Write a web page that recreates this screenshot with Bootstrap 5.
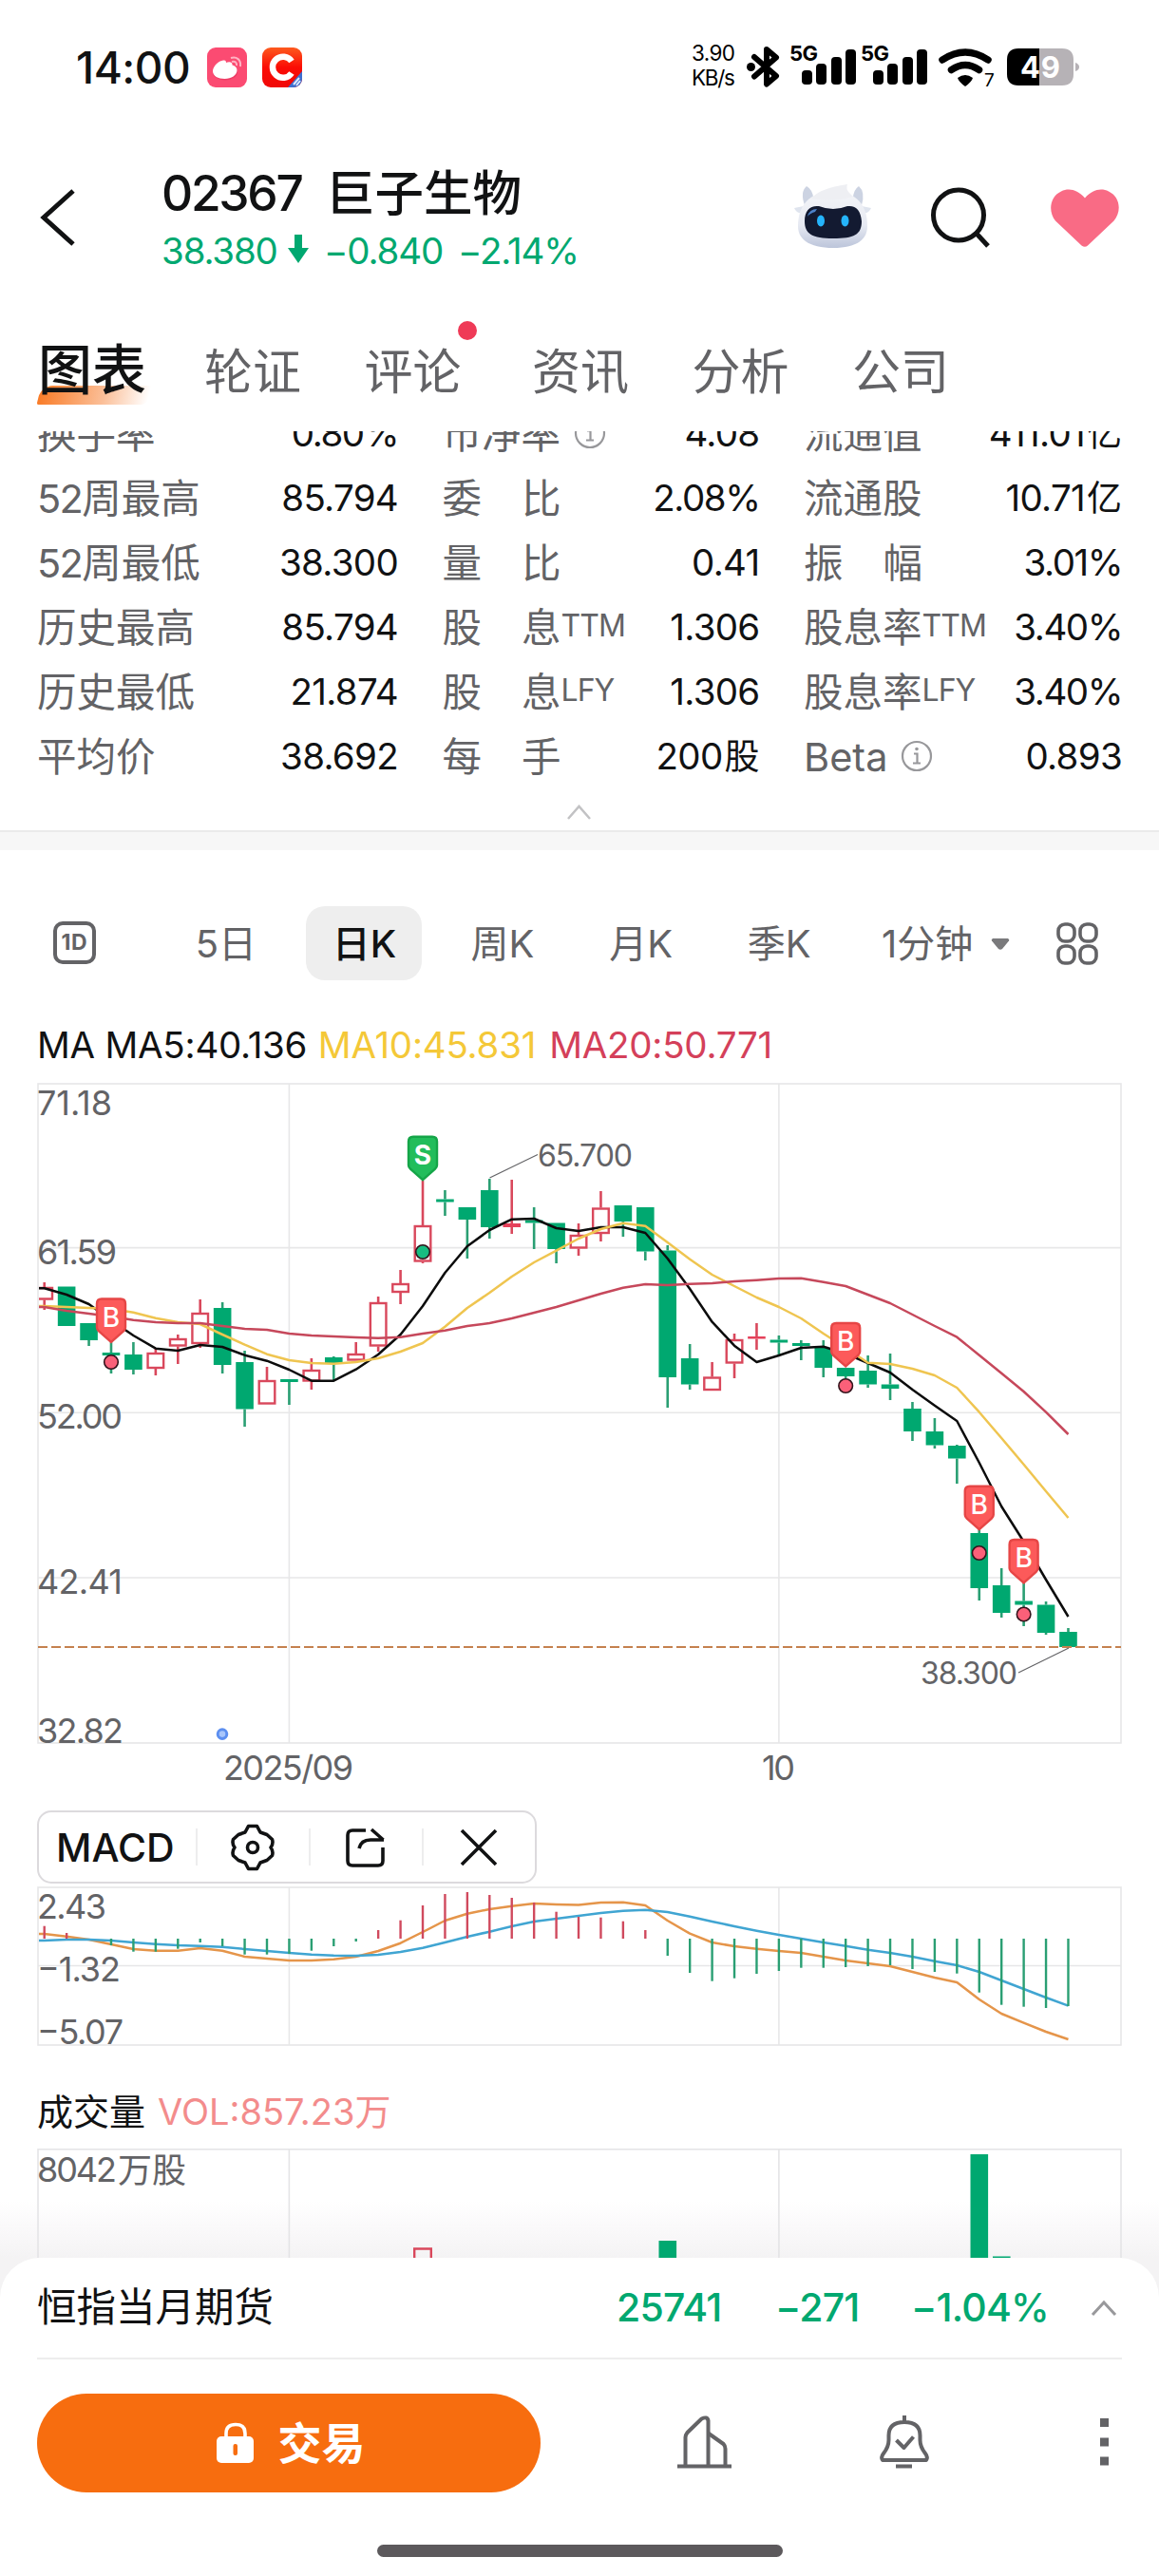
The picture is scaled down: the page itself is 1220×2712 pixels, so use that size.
<!DOCTYPE html>
<html lang="zh-CN">
<head>
<meta charset="utf-8">
<meta name="viewport" content="width=device-width, initial-scale=1">
<title>02367 巨子生物</title>
<link href="https://cdn.jsdelivr.net/npm/bootstrap@5.3.0/dist/css/bootstrap.min.css" rel="stylesheet">
<style>
:root{--ink:#111213;--grey:#636366;--green:#00a870;--line:#e7e7e8}
body{font-family:Inter,"Noto Sans CJK SC",sans-serif;color:var(--ink);background:#fff;width:1220px;height:2712px;overflow:hidden;line-height:1}
svg{display:block;flex:none}
.screen{width:1220px;height:2712px;overflow:hidden}
.num{letter-spacing:-.04em}
.status-bar{height:142px;padding:0 20px 0 80px}
.clock{font-size:46px;font-weight:500;letter-spacing:-.01em;width:118px;white-space:nowrap}
.app-icon{margin-left:20px}
.app-icon + .app-icon{margin-left:16px}
.app-bar{height:170px;padding-left:40px}
.back{margin-top:56px}
.title-block{width:660px;margin:33px 0 0 88px}
.stock-title{font-size:51.5px;font-weight:500;height:58px;white-space:pre}
.stock-title .code{letter-spacing:-.045em;width:173px}
.stock-sub{font-size:38.5px;color:var(--green);height:50px;margin-top:6px;letter-spacing:-.03em}
.stock-sub svg{margin-top:-4px}
.head-icons{margin-top:40px}
.tabs{height:142px;padding:50px 0 0 40px;color:var(--grey);font-size:51px;line-height:60px}
.tabs a{color:inherit;text-decoration:none;position:relative;margin-right:66.5px}
.tabs a.on{color:var(--ink);font-size:57px;font-weight:500;margin-right:61px;line-height:56px}
.tabs a.on span{position:relative}
.tabs .after-dot{margin-left:8px}
.swash{position:absolute;left:1px;top:44px;width:116px;height:20px;border-radius:12px 0 6px 2px;background:linear-gradient(90deg,#f97c28,#fbc09a 60%,#fff);transform:skewX(-14deg)}
.red-dot{position:absolute;right:-16px;top:-24px;width:20px;height:20px;border-radius:50%;background:#ef3a57}
.stats{height:420px;overflow:hidden;padding:0 39px}
.stats-inner{margin-top:-30.5px;gap:46.5px}
.stat-col{font-size:41.5px}
.stat{height:68px;color:var(--grey)}
.stat b{font-weight:400;color:var(--ink);font-size:38.5px;margin-top:-3px;letter-spacing:-.018em}
.stat b.pct{letter-spacing:-.038em}
.stat i{font-style:normal;font-size:37px;letter-spacing:0;margin-left:2px}
.stat small{font-size:32px;margin-top:-5px;letter-spacing:-.03em}
.gap-char{margin-left:42px}
.info{margin-left:14px;margin-top:-3px}
.collapse-mark{margin-top:14px}
.band{height:21px;background:#f7f7f7;border-top:2px solid #ebebeb}
.periods{height:165px;padding-top:59px;color:var(--grey);font-size:40px}
.periods .pill{height:78px;width:122px;border-radius:20px;padding-top:2px}
.periods .slot{width:145.6px}
.pill.on{background:#eee;color:var(--ink);font-weight:500}
.one-day{margin-left:55px}
.minute{height:80px;margin-left:35px}
.minute span{width:114px}
.grid-ico{margin:16px 0 0 47px}
.legend{height:70px;padding:10px 39px 0;font-size:38.5px;letter-spacing:-.006em;white-space:pre}
.ma10{color:#f4c838;margin-left:1px}
.ma20{color:#d4405a;margin-left:14px}
.tool{width:526px;height:77px;margin-left:39px;border:2px solid #dcdadd;border-radius:15px}
.tool>div{height:39px;border-left:2px solid #ededee;width:120px}
.tool .nm{border:0;font-size:41px;font-weight:500;line-height:41px;width:166px;padding-left:18px}
.vol-legend{height:69px;padding-left:39px;font-size:38px;color:#f38c8c}
.vol-legend .nm{color:var(--ink);margin-right:13px}
#volume{background:linear-gradient(#fff 50%,#fbfafb 70%,#f4f3f4)}
.sheet-wrap{background:#f4f3f4}
.sheet{height:335px;background:#fff;border-radius:42px 42px 0 0}
.index-row{height:107px;margin:0 39px;border-bottom:2px solid #ededed;font-size:41.5px}
.index-row .q{color:var(--green);font-weight:500;font-size:41px;letter-spacing:-.02em}
.index-row svg{margin-right:3px}
.trade{width:530px;height:104px;border-radius:52px;background:#f76d0f;color:#fff;font-size:46px;font-weight:700;border:0}
.trade svg{margin:0 25px 0 4px}
.actions{padding:36px 39px 0;height:140px}
.home{width:427px;height:13px;border-radius:7px;background:#5c595c;margin:55px auto 0}
svg text{font-family:Inter,"Noto Sans CJK SC",sans-serif}
</style>
<script src="https://cdn.jsdelivr.net/npm/bootstrap@5.3.0/dist/js/bootstrap.bundle.min.js"></script>
</head>
<body>
<main class="screen d-flex flex-column">

<div class="status-bar d-flex align-items-center flex-shrink-0">
  <div class="clock">14:00</div>
  <svg class="app-icon" width="42" height="42" viewBox="0 0 42 42"><rect width="42" height="42" rx="9" fill="#fb4b72"/><ellipse cx="19" cy="26" rx="13" ry="8.5" fill="#e0305a" opacity=".5"/><path d="M6 25c0-5 6-11 11-11.500c3-.5 3 1.500 3 2.500c3-1.500 7-1 6.500 2.500c3 .8 5 2.800 5 5.500c0 5-6 9-13 9S6 30 6 25z" fill="#fff"/><path d="M25 11c6-2 11 2 10 9M26 15c3.500-1 5.500 1 5 4" fill="none" stroke="#ffb3c3" stroke-width="2"/></svg>
  <svg class="app-icon" width="42" height="42" viewBox="0 0 42 42"><defs><clipPath id="rc"><rect width="42" height="42" rx="9"/></clipPath><linearGradient id="rg" x2="0" y2="1"><stop stop-color="#fd5a1e"/><stop offset=".5" stop-color="#fb0c05"/><stop offset="1" stop-color="#f00808"/></linearGradient></defs><g clip-path="url(#rc)"><rect width="42" height="42" fill="url(#rg)"/><path d="M42 25v17H27z" fill="#3e6fd0"/><path d="M33 39l6-7M36 40l4-5" stroke="#dce8fb" stroke-width="2"/></g><path d="M31 14.500A11 11 0 1 0 31 27" fill="none" stroke="#fff" stroke-width="6.500"/></svg>
  <svg class="ms-auto" width="480" height="60" viewBox="720 41 480 60">
    <g font-size="22.500"><text x="728" y="64" textLength="46">3.90</text><text x="728" y="90" textLength="46">KB/s</text></g>
    <path d="M794 60l23 20-10 8.500V52l10 8.500-23 20" fill="none" stroke="#000" stroke-width="6" stroke-linejoin="round" stroke-linecap="round"/><circle cx="790.500" cy="70.500" r="4.500"/>
    <g id="sig"><text x="831" y="64" font-size="22" font-weight="700" textLength="30">5G</text><rect x="844" y="74" width="11" height="15" rx="4"/><rect x="859" y="67" width="11" height="22" rx="4"/><rect x="875" y="60" width="11" height="29" rx="4"/><rect x="890" y="52" width="11" height="37" rx="4"/></g>
    <use href="#sig" x="75"/>
    <path d="M992 63q24-16 48 0M1001.500 73.500q14.500-10 29 0" fill="none" stroke="#000" stroke-width="7.500" stroke-linecap="round"/><path d="M1008 82q8-6 16 0q-1 4-8 9q-7-5-8-9z"/><text x="1036" y="91" font-size="19">7</text>
    <path d="M1094 51h-22q-12 0-12 12v15q0 12 12 12h22z"/><path d="M1094 51h24q12 0 12 12v15q0 12-12 12h-24z" fill="#b6b2b6"/><path d="M1132 66q4 1.500 4 4.500t-4 4.500z" fill="#b6b2b6"/><text x="1074" y="82" font-size="31" font-weight="700" fill="#fff" textLength="42">49</text>
  </svg>
</div>

<header class="app-bar d-flex flex-shrink-0">
  <svg class="back" width="42" height="62" viewBox="0 0 42 62"><path d="M37 3L6 31l31 28" fill="none" stroke="#111213" stroke-width="5"/></svg>
  <div class="title-block">
    <div class="stock-title d-flex align-items-center"><span class="code">02367</span><span>巨子生物</span></div>
    <div class="stock-sub d-flex align-items-center"><span style="width:133px">38.380</span><svg width="22" height="30" viewBox="0 0 22 30"><path d="M7 0h8v14h7L11 30 0 14h7z" fill="#00a870"/></svg><span style="margin-left:16px;width:141px">−0.840</span><span>−2.14%</span></div>
  </div>
  <svg class="head-icons" width="390" height="90" viewBox="830 182 390 90">
    <defs><linearGradient id="head" x2="0" y2="1"><stop stop-color="#f4f5f8"/><stop offset=".6" stop-color="#e6e9f2"/><stop offset="1" stop-color="#bcc5da"/></linearGradient></defs>
    <path d="M847 216q-5-14 2-20q7 4 7 13M907 216q4-14-3-20q-6 4-6 13" fill="#ccd3e2"/><path d="M846 217l-10 2q3 7 10 5M907 217l10 2q-3 7-10 5" fill="#dfe4ee"/>
    <path d="M840 238c0-22 12-36 37-36s36 14 36 36c0 16-14 23-36 23s-37-7-37-23z" fill="url(#head)"/>
    <path d="M854 209c7-8 18-12 38-15q-2 5 2 9l4 4q-20 6-44 2z" fill="#eeeff3"/>
    <path d="M862 217q15 6 30 0c9-1 14 4 15 16c0 14-8 18-30 18s-30-5-30-18c0-12 6-17 15-16z" fill="#131a31"/><path d="M850 228q2-8 10-8l-2 3q-6 2-8 5z" fill="#4d82c9"/>
    <ellipse cx="864" cy="232.500" rx="4" ry="6" fill="#25b4fb"/><ellipse cx="889.500" cy="232.500" rx="4" ry="6" fill="#25b4fb"/>
    <circle cx="1009" cy="226.500" r="26.500" fill="none" stroke="#111213" stroke-width="5"/><path d="M1028 246l12 13" stroke="#111213" stroke-width="5"/>
    <path d="M1138.500 258.500L1111 232.500C1103 223 1105 207 1117 201.500c8-4 17-2 25 7 8-9 17-11 25-7 12 5.500 14 21 5.500 31L1145 258.500q-3 2.500-6.500 0z" fill="#f96b85"/>
  </svg>
</header>

<nav class="tabs d-flex flex-shrink-0">
  <a class="on"><div class="swash"></div><span>图表</span></a><a>轮证</a><a>评论<div class="red-dot"></div></a><a class="after-dot">资讯</a><a>分析</a><a>公司</a>
</nav>

<section class="stats flex-shrink-0">
  <div class="stats-inner d-flex">
    <div class="stat-col" style="width:380px">
      <div class="stat d-flex align-items-center"><span>换手率</span><b class="ms-auto pct">0.80%</b></div>
      <div class="stat d-flex align-items-center"><span class="num">52</span><span>周最高</span><b class="ms-auto">85.794</b></div>
      <div class="stat d-flex align-items-center"><span class="num">52</span><span>周最低</span><b class="ms-auto">38.300</b></div>
      <div class="stat d-flex align-items-center"><span>历史最高</span><b class="ms-auto">85.794</b></div>
      <div class="stat d-flex align-items-center"><span>历史最低</span><b class="ms-auto">21.874</b></div>
      <div class="stat d-flex align-items-center"><span>平均价</span><b class="ms-auto">38.692</b></div>
    </div>
    <div class="stat-col" style="width:334px">
      <div class="stat d-flex align-items-center"><span>市净率</span><svg class="info" width="34" height="34" viewBox="0 0 34 34"><g fill="none" stroke="#98989b" stroke-width="2.200"><circle cx="17" cy="17" r="15"/><path d="M14 14.500h3.500V24M13 24.500h8"/></g><circle cx="17" cy="9.500" r="1.800" fill="#98989b"/></svg><b class="ms-auto">4.08</b></div>
      <div class="stat d-flex align-items-center"><span>委</span><span class="gap-char">比</span><b class="ms-auto pct">2.08%</b></div>
      <div class="stat d-flex align-items-center"><span>量</span><span class="gap-char">比</span><b class="ms-auto">0.41</b></div>
      <div class="stat d-flex align-items-center"><span>股</span><span class="gap-char">息</span><small>TTM</small><b class="ms-auto">1.306</b></div>
      <div class="stat d-flex align-items-center"><span>股</span><span class="gap-char">息</span><small>LFY</small><b class="ms-auto">1.306</b></div>
      <div class="stat d-flex align-items-center"><span>每</span><span class="gap-char">手</span><b class="ms-auto">200<i>股</i></b></div>
    </div>
    <div class="stat-col" style="width:335px">
      <div class="stat d-flex align-items-center"><span>流通值</span><b class="ms-auto">411.01<i>亿</i></b></div>
      <div class="stat d-flex align-items-center"><span>流通股</span><b class="ms-auto">10.71<i>亿</i></b></div>
      <div class="stat d-flex align-items-center"><span>振</span><span class="gap-char">幅</span><b class="ms-auto pct">3.01%</b></div>
      <div class="stat d-flex align-items-center"><span>股息率</span><small>TTM</small><b class="ms-auto pct">3.40%</b></div>
      <div class="stat d-flex align-items-center"><span>股息率</span><small>LFY</small><b class="ms-auto pct">3.40%</b></div>
      <div class="stat d-flex align-items-center"><span>Beta</span><svg class="info" width="34" height="34" viewBox="0 0 34 34"><g fill="none" stroke="#98989b" stroke-width="2.200"><circle cx="17" cy="17" r="15"/><path d="M14 14.500h3.500V24M13 24.500h8"/></g><circle cx="17" cy="9.500" r="1.800" fill="#98989b"/></svg><b class="ms-auto">0.893</b></div>
    </div>
  </div>
  <svg class="collapse-mark mx-auto" width="30" height="18" viewBox="0 0 30 18"><path d="M3 16L14.500 3 26 16" fill="none" stroke="#c2c2c4" stroke-width="2.500"/></svg>
</section>
<div class="band flex-shrink-0"></div>

<div class="periods d-flex flex-shrink-0">
  <svg class="one-day" width="110" height="78" viewBox="0 0 110 78"><rect x="3" y="18" width="41" height="41" rx="8" fill="none" stroke="#636366" stroke-width="4"/><text x="9.500" y="46" font-size="23" font-weight="700" fill="#636366" textLength="27">1D</text></svg>
  <div class="slot d-flex justify-content-center"><div class="pill d-flex align-items-center justify-content-center"><span>5日</span></div></div>
  <div class="slot d-flex justify-content-center"><div class="pill on d-flex align-items-center justify-content-center"><span>日K</span></div></div>
  <div class="slot d-flex justify-content-center"><div class="pill d-flex align-items-center justify-content-center"><span>周K</span></div></div>
  <div class="slot d-flex justify-content-center"><div class="pill d-flex align-items-center justify-content-center"><span>月K</span></div></div>
  <div class="slot d-flex justify-content-center"><div class="pill d-flex align-items-center justify-content-center"><span>季K</span></div></div>
  <div class="minute d-flex align-items-center"><span>1分钟</span><svg width="22" height="14" viewBox="0 0 22 14"><path d="M3 1h16q2 1 1 2.500l-7 8.500q-2 1.500-4 0L2 3.500Q1 2 3 1z" fill="#7a7a7c"/></svg></div>
  <svg class="grid-ico" width="46" height="46" viewBox="0 0 46 46"><g fill="none" stroke="#636366" stroke-width="3.600"><rect x="3" y="3" width="17" height="18" rx="7"/><rect x="26" y="3" width="17" height="18" rx="7"/><rect x="3" y="26" width="17" height="18" rx="7"/><rect x="26" y="26" width="17" height="18" rx="7"/></g></svg>
</div>

<div class="legend d-flex align-items-center flex-shrink-0"><span>MA MA5:40.136 </span><span class="ma10">MA10:45.831</span><span class="ma20">MA20:50.771</span></div>

<svg id="kline" class="flex-shrink-0" width="1220" height="776" viewBox="0 1130 1220 776"></svg>

<div class="tool d-flex align-items-center flex-shrink-0">
  <div class="nm">MACD</div>
  <div class="d-flex align-items-center justify-content-center"><svg width="48" height="50" viewBox="0 0 48 50"><path d="M19.500 2.500h9l3.500 6.500 7 2.500 5.500 5q1.500 4.500-1.500 8.500q3 4 1.500 8.500l-5.500 5-7 2.500-3.500 6.500h-9L16 41l-7-2.500-5.500-5Q2 29 5 25 2 21 3.500 16.500l5.500-5L16 9z" fill="none" stroke="#111213" stroke-width="3.600" stroke-linejoin="round"/><circle cx="24" cy="25" r="5.500" fill="none" stroke="#111213" stroke-width="3.600"/></svg></div>
  <div class="d-flex align-items-center justify-content-center"><svg width="44" height="44" viewBox="0 0 44 44"><path d="M22 4H8q-5 0-5 5v27q0 5 5 5h27q5 0 5-5V22M15 23q2-9 12-9h14M28 3l12.500 11" fill="none" stroke="#111213" stroke-width="3.600"/></svg></div>
  <div class="d-flex align-items-center justify-content-center"><svg width="42" height="42" viewBox="0 0 42 42"><path d="M3 3l36 36M39 3L3 39" stroke="#111213" stroke-width="3.600"/></svg></div>
</div>

<svg id="macd" class="flex-shrink-0" width="1220" height="205" viewBox="0 1983 1220 205"></svg>

<div class="vol-legend d-flex align-items-center flex-shrink-0"><span class="nm">成交量</span><span>VOL:857.23</span><span>万</span></div>

<svg id="volume" class="flex-shrink-0" width="1220" height="120" viewBox="0 2257 1220 120"></svg>

<div class="sheet-wrap flex-shrink-0"><div class="sheet">
  <div class="index-row d-flex align-items-center"><span style="width:610px">恒指当月期货</span><span class="q" style="width:167px">25741</span><span class="q" style="width:143px">−271</span><span class="q">−1.04%</span><svg class="ms-auto" width="32" height="18" viewBox="0 0 32 18"><path d="M4 16L16 3l12 13" fill="none" stroke="#98989b" stroke-width="3"/></svg></div>
  <div class="actions d-flex">
    <button class="trade d-flex align-items-center justify-content-center"><svg width="40" height="44" viewBox="0 0 40 44"><path d="M10 16v-4q0-9.500 10-9.500T30 12v4" fill="none" stroke="#fff" stroke-width="3.600"/><rect x="0" y="15" width="39" height="28" rx="5" fill="#fff"/><rect x="17.500" y="23" width="4.500" height="12" rx="2" fill="#f76d0f"/></svg>交易</button>
    <svg width="612" height="104" viewBox="569 2512 612 104"><g fill="none" stroke="#636366" stroke-width="4" stroke-linejoin="round"><path d="M713 2588.500h57"/><path d="M721.500 2587v-29q0-2.500 2-5l15-14.500q6-3 7 2V2587"/><path d="M746 2554l15.500 11q2 2 2 5V2587"/><path d="M929 2582q-2-3 1-7 5.500-7 5.500-14v-5q0-14 16.500-14t16.500 14v5q0 7 5.500 14 3 4 1 7zM952 2535v6M943 2588.500h17"/><path d="M943.500 2561l8 8 10-11.500"/></g><g fill="#636366"><rect x="1158" y="2538" width="9" height="9"/><rect x="1158" y="2558.500" width="9" height="9"/><rect x="1158" y="2578.500" width="9" height="9"/></g></svg>
  </div>
  <div class="home"></div>
</div></div>
</main>

<script>
// One slot per trading day, shared by all three panes.
const X = i => 46.7 + 23.43 * i;
const RED = '#d9485c', GREEN = '#00a870', WICK = '#2a9f73';
// [up/down, high, body top, body bottom, low]
const candles = [
 ['r',1350,1355,1368.5,1379],['g',1354.5,1354.5,1396,1396],['g',1393,1393,1411,1417],['g',1413,1424,1427,1446],
 ['g',1413,1426,1442,1447],['r',1419,1424,1441,1448],['r',1405,1409,1417.5,1436],['r',1368,1382,1415,1419],
 ['g',1371,1377,1437,1446],['g',1422,1434,1483.5,1502],['r',1439,1453,1478.5,1478],['g',1452,1452,1455,1479],
 ['r',1430,1442,1454.5,1463],['g',1428,1429,1435,1453],['r',1413,1425,1432.5,1432],['r',1365,1371,1417.5,1423],
 ['r',1337,1351,1361,1373],['r',1243,1290,1328.5,1330],['g',1253,1262.5,1265.5,1280],['g',1271,1271,1284,1325],
 ['g',1241,1253,1292,1304],['R',1242,1288,1292,1299],['g',1271,1284.5,1287.5,1315],['g',1287.5,1287.5,1315,1330],
 ['r',1288,1300,1314.5,1322],['r',1254,1271.5,1299,1307],['g',1269,1269,1286,1302],['g',1271,1271,1317.5,1327],
 ['g',1311,1316.5,1450,1482],['g',1415,1430,1457.5,1463],['r',1434,1449.5,1464,1464],['r',1404,1410,1435.5,1451],
 ['R',1393,1407,1409.5,1421],['g',1406,1410.5,1413.5,1427],['g',1411,1414,1417,1432],['g',1411,1419,1440,1450],
 ['g',1440,1440,1449,1455],['g',1427,1443,1457.5,1461],['g',1425,1457.5,1462,1474],['g',1476,1483,1507,1517],
 ['g',1493,1507,1521.5,1525],['g',1521,1522,1535.5,1562],['g',1608,1614,1672,1685],['g',1651,1669,1698,1703],
 ['g',1665,1685.5,1689.5,1712],['g',1686,1689.5,1719,1721],['g',1714,1718,1734,1734]];
const ma5 = [1356.3,1363,1373,1390,1406,1419.7,1422,1416,1418,1426.7,1432.7,1442,1453.7,1453.7,1441.7,1426,1405,1375,1340,1312,1295,1283.7,1283,1293,1296,1292,1292,1298,1325,1357,1391.7,1416.7,1434,1427,1419,1417.7,1425,1435,1445,1463,1479.7,1496,1540,1586,1623,1663,1702];
const ma10 = [1375,1376,1377,1378,1381.7,1387.7,1392,1394,1405,1415.7,1425.7,1432,1435,1435.7,1434,1430,1423,1414,1396.7,1377,1361,1344,1329,1316.7,1304,1294,1287.7,1290.7,1308,1325.7,1342,1354,1366,1376,1388,1404,1419,1434.7,1436,1441,1448,1461,1486.7,1514,1541.7,1570,1598];
const ma20 = [1376,1380,1383,1386,1389.7,1392,1393,1393,1396,1399,1400,1404,1406,1407,1408,1408.7,1407.7,1404,1400.7,1396,1393,1388,1382,1376,1369,1362,1355.7,1352,1353,1351.7,1351,1349,1347.7,1346,1345.7,1349.7,1354,1363,1372,1384,1396,1407.7,1426.7,1445.7,1465,1486.7,1510];
const hist = [2027.7,2035,2041,2048,2054.7,2054.7,2051.7,2045,2049,2057.7,2057.7,2057,2053.7,2049,2044,2032,2021.7,2006,1994,1992,1995,1998,2003,2012.7,2018,2018.7,2022.7,2032,2059,2077,2085.7,2082.7,2078,2075,2071.7,2071.7,2071,2070,2069,2073,2076,2077.7,2097.7,2110.7,2112.7,2114,2112];
const dif = [2036,2038.7,2042,2047,2052,2053.7,2053.7,2051,2053.7,2060,2062,2064,2064,2062.7,2060,2054,2045.7,2034,2022,2014.7,2010,2006.7,2004,2005,2005.5,2003,2002.7,2006,2022,2035.7,2045,2049,2051.7,2054,2056,2060,2064,2067,2070,2076,2082,2087,2105,2120,2129.7,2139,2147];
const dea = [2043,2042,2042,2043,2045,2046.7,2048,2048.7,2049.7,2052,2054,2056,2057.7,2058.7,2059,2058,2055,2050.7,2045,2039,2033.7,2028,2023,2020,2017,2014,2011.7,2010.7,2013,2017.7,2023,2028,2032.7,2037,2041,2045,2048.7,2052.7,2056,2060,2064.7,2069,2076,2085,2094,2103,2111.7];

const poly = (ys, c) => `<polyline points="41,${ys[0]} ${ys.map((y,i)=>X(i).toFixed(1)+','+y).join(' ')}" fill="none" stroke="${c}" stroke-width="2.5" stroke-linejoin="round"/>`;
const line = (x1,y1,x2,y2,c='#e7e7e8',w=1.6) => `<line x1="${x1}" y1="${y1}" x2="${x2}" y2="${y2}" stroke="${c}" stroke-width="${w}"/>`;
const label = (x,y,s,w,size=36) => `<text x="${x}" y="${y}" font-size="${size}" fill="#636366" textLength="${w}">${s}</text>`;
const frame = (top,bottom,mids) => `<rect x="40" y="${top}" width="1140" height="${bottom-top}" fill="none" stroke="#e7e7e8" stroke-width="1.6"/>` + mids.map(y=>line(40,y,1180,y)).join('') + line(304.4,top,304.4,bottom) + line(819.9,top,819.9,bottom);

function candle([t,h,a,b,l], i) {
  const x = X(i), up = t !== 'g', c = up ? RED : WICK;
  let s = '';
  if (a > h) s += line(x,h,x,a,c,2.6);
  if (l > b) s += line(x,b,x,l,c,2.6);
  if (t === 'r') {
    s += i ? `<rect x="${x-8.3}" y="${a+1}" width="16.600" height="${b-a-2}" fill="none" stroke="${RED}" stroke-width="2.4"/>`
           : `<path d="M41 ${a+1}H${x+8.3}V${b-1}H41" fill="none" stroke="${RED}" stroke-width="2.4"/>`;
  } else s += `<rect x="${x-9.3}" y="${a}" width="18.600" height="${b-a}" fill="${up ? '#e5405a' : GREEN}"/>`;
  return s;
}
function pin(i, top, ch, fill, edge, weight) {
  const x = X(i);
  return `<path d="M${x-10} ${top+1}h20q5 0 5 5v25q0 2-2 4L${x} ${top+46.5}l-13-11.500q-2-2-2-4v-25q0-5 5-5z" fill="${fill}" stroke="${edge}" stroke-width="2.4"/><text x="${x}" y="${top+30}" text-anchor="middle" font-size="28" font-weight="${weight}" fill="#fff">${ch}</text>`;
}
const buy = (i, top) => pin(i, top, 'B', '#fc5a5a', '#e64646', 500);
const spot = (i,y,c) => `<circle cx="${X(i)}" cy="${y}" r="7.300" fill="${c}" stroke="#33141c" stroke-width="1.600"/>`;

document.getElementById('kline').innerHTML =
  frame(1141,1835,[1313.6,1487.3,1661]) +
  candles.map(candle).join('') + poly(ma5,'#0c0c0c') + poly(ma10,'#efc550') + poly(ma20,'#c6485b') +
  `<line x1="40" y1="1734" x2="1180" y2="1734" stroke="#c5814f" stroke-width="2" stroke-dasharray="10 4"/>` +
  line(515.5,1240,566,1215.5,'#636366',1.2) + line(1072,1761,1125,1735,'#636366',1.2) +
  label(566,1228,'65.700',100,32) + label(969,1773,'38.300',102,32) +
  label(39,1174,'71.18',79) + label(39,1331,'61.59',84) + label(39,1504,'52.00',90) + label(39,1678,'42.41',90) + label(39,1835,'32.82',91) +
  label(235,1874,'2025/09',137) + label(802,1874,'10',35) +
  spot(3,1434,'#fb6079') + spot(17,1318,'#18bd81') + spot(36,1459,'#fb6079') + spot(42,1635,'#fb6079') + spot(44,1699.5,'#fb6079') +
  buy(3,1366.5) + pin(17,1195.7,'S','#22bd5b','#15a548',700) + buy(36,1392) + buy(42,1563.7) + buy(44,1620) +
  `<circle cx="234" cy="1825.600" r="4.800" fill="#a9c6fb" stroke="#5d8ff0" stroke-width="3"/>`;

document.getElementById('macd').innerHTML =
  frame(1987,2153,[2069.5]) + label(39,2020,'2.43',73) + label(39,2086,'−1.32',88) + label(39,2152,'−5.07',91) +
  poly(dif,'#e5954a') + poly(dea,'#40a5d2') +
  hist.map((y,i)=> y === 2041 ? '' : line(X(i),2041,X(i),y, y < 2041 ? '#d04a5e' : '#2a9f73',2.4)).join('');

document.getElementById('volume').innerHTML =
  `<path d="M40 2377V2262.800H1180V2377M304.400 2262.800V2377M819.900 2262.800V2377" fill="none" stroke="#e4e4e6" stroke-width="1.600"/>` +
  label(39,2296.5,'8042',84) + `<text x="124" y="2297.500" font-size="36" fill="#636366">万股</text>` +
  `<path d="M436.200 2379V2367.500h17.600v12" fill="none" stroke="#d9485c" stroke-width="2.400"/>` +
  `<g fill="#00a870"><rect x="693.500" y="2359" width="18.600" height="18"/><rect x="1021.500" y="2268" width="18.600" height="109"/><rect x="1045" y="2375.500" width="18.600" height="2"/></g>`;
</script>
</body>
</html>
